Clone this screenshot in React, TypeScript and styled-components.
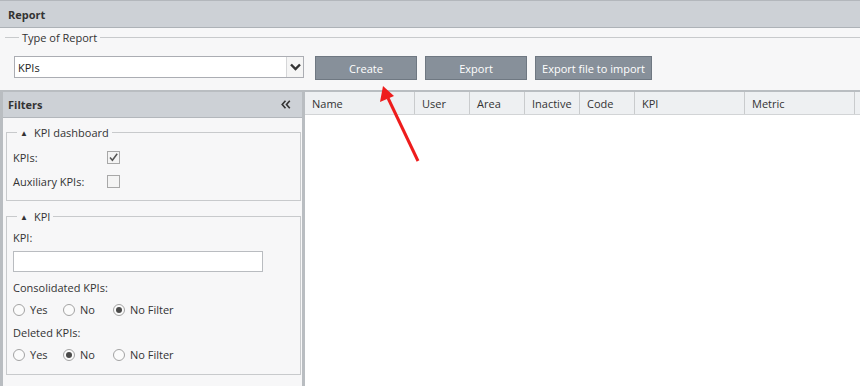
import styled, { createGlobalStyle } from "styled-components";

const GlobalStyle = createGlobalStyle`
  html, body {
    margin: 0;
    padding: 0;
    background: #ffffff;
  }
  body {
    font-family: "Open Sans", "Noto Sans", Arial, sans-serif;
    font-size: 11px;
    color: #2b2b2b;
  }
`;

const columns = [
  { label: "Name", width: 110 },
  { label: "User", width: 55 },
  { label: "Area", width: 55 },
  { label: "Inactive", width: 55 },
  { label: "Code", width: 55 },
  { label: "KPI", width: 110 },
  { label: "Metric", width: 110 },
  { label: "", width: 40 },
];

function Chevron() {
  return (
    <svg width="11" height="8" viewBox="0 0 11 8">
      <path d="M1 1.5 L5.5 6 L10 1.5" fill="none" stroke="#333" strokeWidth="2.4" />
    </svg>
  );
}

function DoubleLeft() {
  return (
    <svg width="10" height="9" viewBox="0 0 10 9">
      <path d="M4.5 0.8 L1.2 4.5 L4.5 8.2 M8.8 0.8 L5.5 4.5 L8.8 8.2" fill="none" stroke="#333" strokeWidth="1.6" />
    </svg>
  );
}

function Check({ checked }: { checked?: boolean }) {
  return (
    <CheckBox>
      {checked && (
        <svg width="11" height="11" viewBox="0 0 11 11">
          <path d="M2 5.5 L4.4 8.3 L9.2 1.8" fill="none" stroke="#555" strokeWidth="1.5" />
        </svg>
      )}
    </CheckBox>
  );
}

function Radio({ label, checked }: { label: string; checked?: boolean }) {
  return (
    <RadioItem>
      <RadioDot $checked={checked} />
      {label}
    </RadioItem>
  );
}

function App() {
  return (
    <>
      <GlobalStyle />
      <Page>
        <TitleBar>Report</TitleBar>

        {/* tipo de relatório + botões */}
        <TopPanel>
          <TypeFieldset>
            <legend>Type of Report</legend>
            <TopRow>
              <Select>
                <span className="value">KPIs</span>
                <span className="arrow">
                  <Chevron />
                </span>
              </Select>
              <ActionButton $width={102}>Create</ActionButton>
              <ActionButton $width={102}>Export</ActionButton>
              <ActionButton $width={117}>Export file to import</ActionButton>
            </TopRow>
          </TypeFieldset>
        </TopPanel>

        <Main>
          {/* filtros */}
          <Sidebar>
            <SideHeader>
              <span>Filters</span>
              <DoubleLeft />
            </SideHeader>
            <SideBody>
              <Group $top={5} $bottom={7}>
                <legend>
                  <Tri>▲</Tri>KPI dashboard
                </legend>
                <FieldRow $h={24}>
                  <FieldLabel>KPIs:</FieldLabel>
                  <Check checked />
                </FieldRow>
                <FieldRow $h={24}>
                  <FieldLabel>Auxiliary KPIs:</FieldLabel>
                  <Check />
                </FieldRow>
              </Group>

              <Group $top={2} $bottom={8}>
                <legend>
                  <Tri>▲</Tri>KPI
                </legend>
                <FieldRow $h={22}>KPI:</FieldRow>
                <TextInput />
                <FieldRow $h={22}>Consolidated KPIs:</FieldRow>
                <FieldRow $h={23}>
                  <Radio label="Yes" />
                  <Radio label="No" />
                  <Radio label="No Filter" checked />
                </FieldRow>
                <FieldRow $h={22}>Deleted KPIs:</FieldRow>
                <FieldRow $h={23}>
                  <Radio label="Yes" />
                  <Radio label="No" checked />
                  <Radio label="No Filter" />
                </FieldRow>
              </Group>

              <Group $top={2} $bottom={8}>
                <legend>
                  <Tri>▲</Tri>KPIs
                </legend>
              </Group>
            </SideBody>
          </Sidebar>

          {/* tabela */}
          <TablePane>
            <HeaderRow>
              {columns.map((c, i) => (
                <HeaderCell key={i} $width={c.width}>
                  {c.label}
                </HeaderCell>
              ))}
            </HeaderRow>
          </TablePane>
        </Main>

        <ArrowMark width="860" height="386" viewBox="0 0 860 386">
          <line x1="418" y1="161" x2="388" y2="98" stroke="#ee1c1c" strokeWidth="3" />
          <polygon points="383,86 380,102 394,96" fill="#ee1c1c" />
        </ArrowMark>
      </Page>
    </>
  );
}

export default App;

const Page = styled.div`
  position: relative;
  width: 860px;
  height: 386px;
  overflow: hidden;
  display: flex;
  flex-direction: column;
  background: #f7f7f8;
`;

const TitleBar = styled.div`
  flex-shrink: 0;
  height: 26px;
  display: flex;
  align-items: center;
  padding-left: 8px;
  font-weight: 700;
  font-size: 11px;
  color: #333;
  background: #cdd1d6;
  border-top: 1px solid #b3b7bc;
  border-bottom: 1px solid #adb2b7;
`;

const TopPanel = styled.div`
  flex-shrink: 0;
  height: 62px;
  padding: 2px 0 0 5px;
  box-sizing: border-box;
  background: #f7f7f8;
`;

const TypeFieldset = styled.fieldset`
  margin: 0;
  padding: 11px 0 0 9px;
  border: none;
  border-top: 1px solid #c8cacc;
  min-width: 0;

  legend {
    margin-left: 5px;
    padding: 0 3px;
    line-height: 15px;
    color: #333;
  }
`;

const TopRow = styled.div`
  display: flex;
  align-items: flex-start;
  gap: 8px;
`;

const Select = styled.div`
  width: 290px;
  height: 22px;
  box-sizing: border-box;
  display: flex;
  margin-right: 3px;
  background: #fff;
  border: 1px solid #abadb3;

  .value {
    flex: 1;
    display: flex;
    align-items: center;
    padding-left: 3px;
    color: #222;
  }

  .arrow {
    width: 16px;
    display: flex;
    align-items: center;
    justify-content: center;
    border-left: 1px solid #d5d6d8;
    background: #f5f5f5;
  }
`;

const ActionButton = styled.div<{ $width: number }>`
  width: ${(p) => p.$width}px;
  height: 24px;
  box-sizing: border-box;
  display: flex;
  align-items: center;
  justify-content: center;
  color: #fff;
  background: #87909a;
  border: 1px solid #6f7882;
  white-space: nowrap;
`;

const Main = styled.div`
  flex: 1;
  display: flex;
  border-top: 2px solid #b9bdc1;
  min-height: 0;
`;

const Sidebar = styled.div`
  width: 305px;
  flex-shrink: 0;
  box-sizing: border-box;
  display: flex;
  flex-direction: column;
  border-left: 3px solid #b9bdc1;
  border-right: 3px solid #b9bdc1;
  background: #f7f7f8;
`;

const SideHeader = styled.div`
  flex-shrink: 0;
  height: 25px;
  display: flex;
  align-items: center;
  justify-content: space-between;
  padding: 0 11px 0 5px;
  font-weight: 700;
  color: #333;
  background: #cdd1d6;
  border-bottom: 1px solid #b3b7bc;
`;

const SideBody = styled.div`
  flex-shrink: 0;
  padding: 7px 1px 0 3px;
  display: flex;
  flex-direction: column;
  gap: 8px;
`;

const Group = styled.fieldset<{ $top: number; $bottom: number }>`
  flex-shrink: 0;
  margin: 0;
  padding: ${(p) => p.$top}px 6px ${(p) => p.$bottom}px 6px;
  border: 1px solid #c8cacc;
  min-width: 0;

  legend {
    margin-left: 4px;
    padding: 0 3px;
    line-height: 15px;
    color: #333;
  }
`;

const Tri = styled.span`
  font-size: 8px;
  margin-right: 6px;
  vertical-align: 1px;
`;

const FieldRow = styled.div<{ $h: number }>`
  height: ${(p) => p.$h}px;
  display: flex;
  align-items: center;
  color: #333;
`;

const FieldLabel = styled.span`
  width: 94px;
`;

const CheckBox = styled.span`
  width: 13px;
  height: 13px;
  box-sizing: border-box;
  display: flex;
  align-items: center;
  justify-content: center;
  border: 1px solid #a8a8a8;
  background: #f4f4f4;
`;

const TextInput = styled.div`
  width: 250px;
  height: 21px;
  box-sizing: border-box;
  margin: 3px 0 4px;
  background: #fff;
  border: 1px solid #b9bcc0;
`;

const RadioItem = styled.span`
  flex: 0 0 50px;
  display: flex;
  align-items: center;
  gap: 5px;
  white-space: nowrap;
`;

const RadioDot = styled.span<{ $checked?: boolean }>`
  flex-shrink: 0;
  width: 12px;
  height: 12px;
  box-sizing: border-box;
  border-radius: 50%;
  border: 1px solid #a3a3a3;
  background: #fbfbfb;
  display: flex;
  align-items: center;
  justify-content: center;

  &::after {
    content: "";
    width: 6px;
    height: 6px;
    border-radius: 50%;
    background: ${(p) => (p.$checked ? "#4a4a4a" : "transparent")};
  }
`;

const TablePane = styled.div`
  flex: 1;
  background: #fff;
  overflow: hidden;
`;

const HeaderRow = styled.div`
  display: flex;
  height: 22px;
  background: #eef0f2;
  border-bottom: 1px solid #d2d4d6;
`;

const HeaderCell = styled.div<{ $width: number }>`
  flex: 0 0 ${(p) => p.$width}px;
  box-sizing: border-box;
  display: flex;
  align-items: center;
  padding-left: 7px;
  color: #333;
  border-right: 1px solid #c9cbcd;
`;

const ArrowMark = styled.svg`
  position: absolute;
  left: 0;
  top: 0;
  pointer-events: none;
`;
